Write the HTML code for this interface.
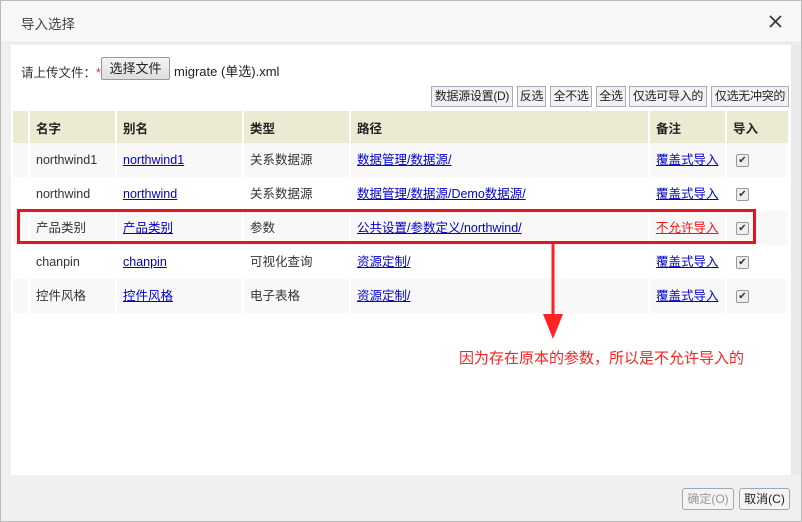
<!DOCTYPE html><html><head><meta charset="utf-8"><style>
*{margin:0;padding:0;box-sizing:border-box}
body{width:802px;height:522px;background:#f0f0f0;font-family:"Liberation Sans","Noto Sans CJK SC",sans-serif;font-size:12.5px;color:#333;position:relative;overflow:hidden}
.frame{position:absolute;left:0;top:0;width:802px;height:522px;border:1px solid #bbb}
.hd{position:absolute;left:0;top:0;width:802px;height:43px;background:#f7f7f7;border-bottom:1px solid #e5e5e5}
.hd span{position:absolute;left:21px;top:13px;font-size:13.5px;color:#444}
.panel{position:absolute;left:11px;top:45px;width:780px;height:430px;background:#fff}
.lbl{position:absolute;left:21px;top:62px}
.fb{position:absolute;left:101px;top:57px;width:69px;height:23px;border:1px solid #999;background:linear-gradient(#f4f4f4,#ddd);border-radius:2px;font-size:13px;text-align:center;line-height:21px;color:#222}
.fn{position:absolute;left:174px;top:61px;color:#222;font-size:13px}
.btn{position:absolute;top:86px;height:21px;border:1px solid #aab;background:#f2f2f2;font-size:12px;line-height:19px;text-align:center;color:#222;white-space:nowrap;overflow:hidden;letter-spacing:-0.3px}
table{position:absolute;left:13px;top:111px;width:775px;border-collapse:collapse;table-layout:fixed}
th{background:#ebead3;height:32px;text-align:left;font-weight:bold;padding-left:6px;border-right:2px solid #fff;font-size:12.5px;color:#222}
td{height:34px;padding-left:6px;border-right:2px solid rgba(255,255,255,0.9);white-space:nowrap;overflow:hidden;line-height:18px;vertical-align:middle}
td span,td a{display:inline-block;vertical-align:middle;line-height:18px}
tr:nth-child(even) td{background:#f8f8f8}
a{color:#00c;text-decoration:underline}
.cb{display:inline-block;width:13px;height:13px;border:1px solid #999;border-radius:2px;background:#eee;font-size:10px;line-height:11px!important;text-align:center;color:#333;margin-left:3px}
.box{position:absolute;left:17px;top:209px;width:739px;height:35px;border:3px solid #e8141c}
.note{position:absolute;left:459px;top:347px;color:#f22;font-size:15px}
.ok{position:absolute;top:488px;height:22px;border:1px solid #9ab;border-radius:3px;background:#f4f4f4;font-size:12px;line-height:20px;text-align:center}
</style></head><body>
<div class="hd"><span>导入选择</span>
<svg style="position:absolute;left:769px;top:15px" width="13" height="13"><path d="M1 1L12 12M12 1L1 12" stroke="#333" stroke-width="1.6"/></svg></div>
<div class="panel"></div>
<div style="position:absolute;left:791px;top:45px;width:11px;height:430px;background:#eaeaea"></div>
<div class="lbl">请上传文件：<span style="color:#e33">*</span></div>
<div class="fb">选择文件</div>
<div class="fn">migrate (单选).xml</div>
<div class="btn" style="left:431px;width:82px">数据源设置(D)</div>
<div class="btn" style="left:517px;width:29px">反选</div>
<div class="btn" style="left:550px;width:42px">全不选</div>
<div class="btn" style="left:596px;width:30px">全选</div>
<div class="btn" style="left:629px;width:78px">仅选可导入的</div>
<div class="btn" style="left:711px;width:78px">仅选无冲突的</div>
<table>
<colgroup><col style="width:16px"><col style="width:87px"><col style="width:127px"><col style="width:107px"><col style="width:299px"><col style="width:77px"><col style="width:62px"></colgroup>
<tr><th style="padding:0"></th><th>名字</th><th>别名</th><th>类型</th><th>路径</th><th>备注</th><th style="border:0">导入</th></tr>
<tr><td></td><td><span>northwind1</span></td><td><a>northwind1</a></td><td><span>关系数据源</span></td><td><a>数据管理/数据源/</a></td><td><a>覆盖式导入</a></td><td><span class="cb">✔</span></td></tr>
<tr><td></td><td><span>northwind</span></td><td><a>northwind</a></td><td><span>关系数据源</span></td><td><a>数据管理/数据源/Demo数据源/</a></td><td><a>覆盖式导入</a></td><td><span class="cb">✔</span></td></tr>
<tr><td></td><td><span>产品类别</span></td><td><a>产品类别</a></td><td><span>参数</span></td><td><a>公共设置/参数定义/northwind/</a></td><td><a style="color:#f11">不允许导入</a></td><td><span class="cb">✔</span></td></tr>
<tr><td></td><td><span>chanpin</span></td><td><a>chanpin</a></td><td><span>可视化查询</span></td><td><a>资源定制/</a></td><td><a>覆盖式导入</a></td><td><span class="cb">✔</span></td></tr>
<tr><td></td><td><span>控件风格</span></td><td><a>控件风格</a></td><td><span>电子表格</span></td><td><a>资源定制/</a></td><td><a>覆盖式导入</a></td><td><span class="cb">✔</span></td></tr>
</table>
<div class="box"></div>
<svg style="position:absolute;left:538px;top:244px" width="30" height="96"><line x1="15" y1="0" x2="15" y2="80" stroke="#f22" stroke-width="3"/><polygon points="5,70 25,70 15,95" fill="#f22"/></svg>
<div class="note">因为存在原本的参数，所以是不允许导入的</div>
<div class="ok" style="left:682px;width:52px;color:#999">确定(O)</div>
<div class="ok" style="left:739px;width:51px;color:#222">取消(C)</div>
<div class="frame"></div>
</body></html>
